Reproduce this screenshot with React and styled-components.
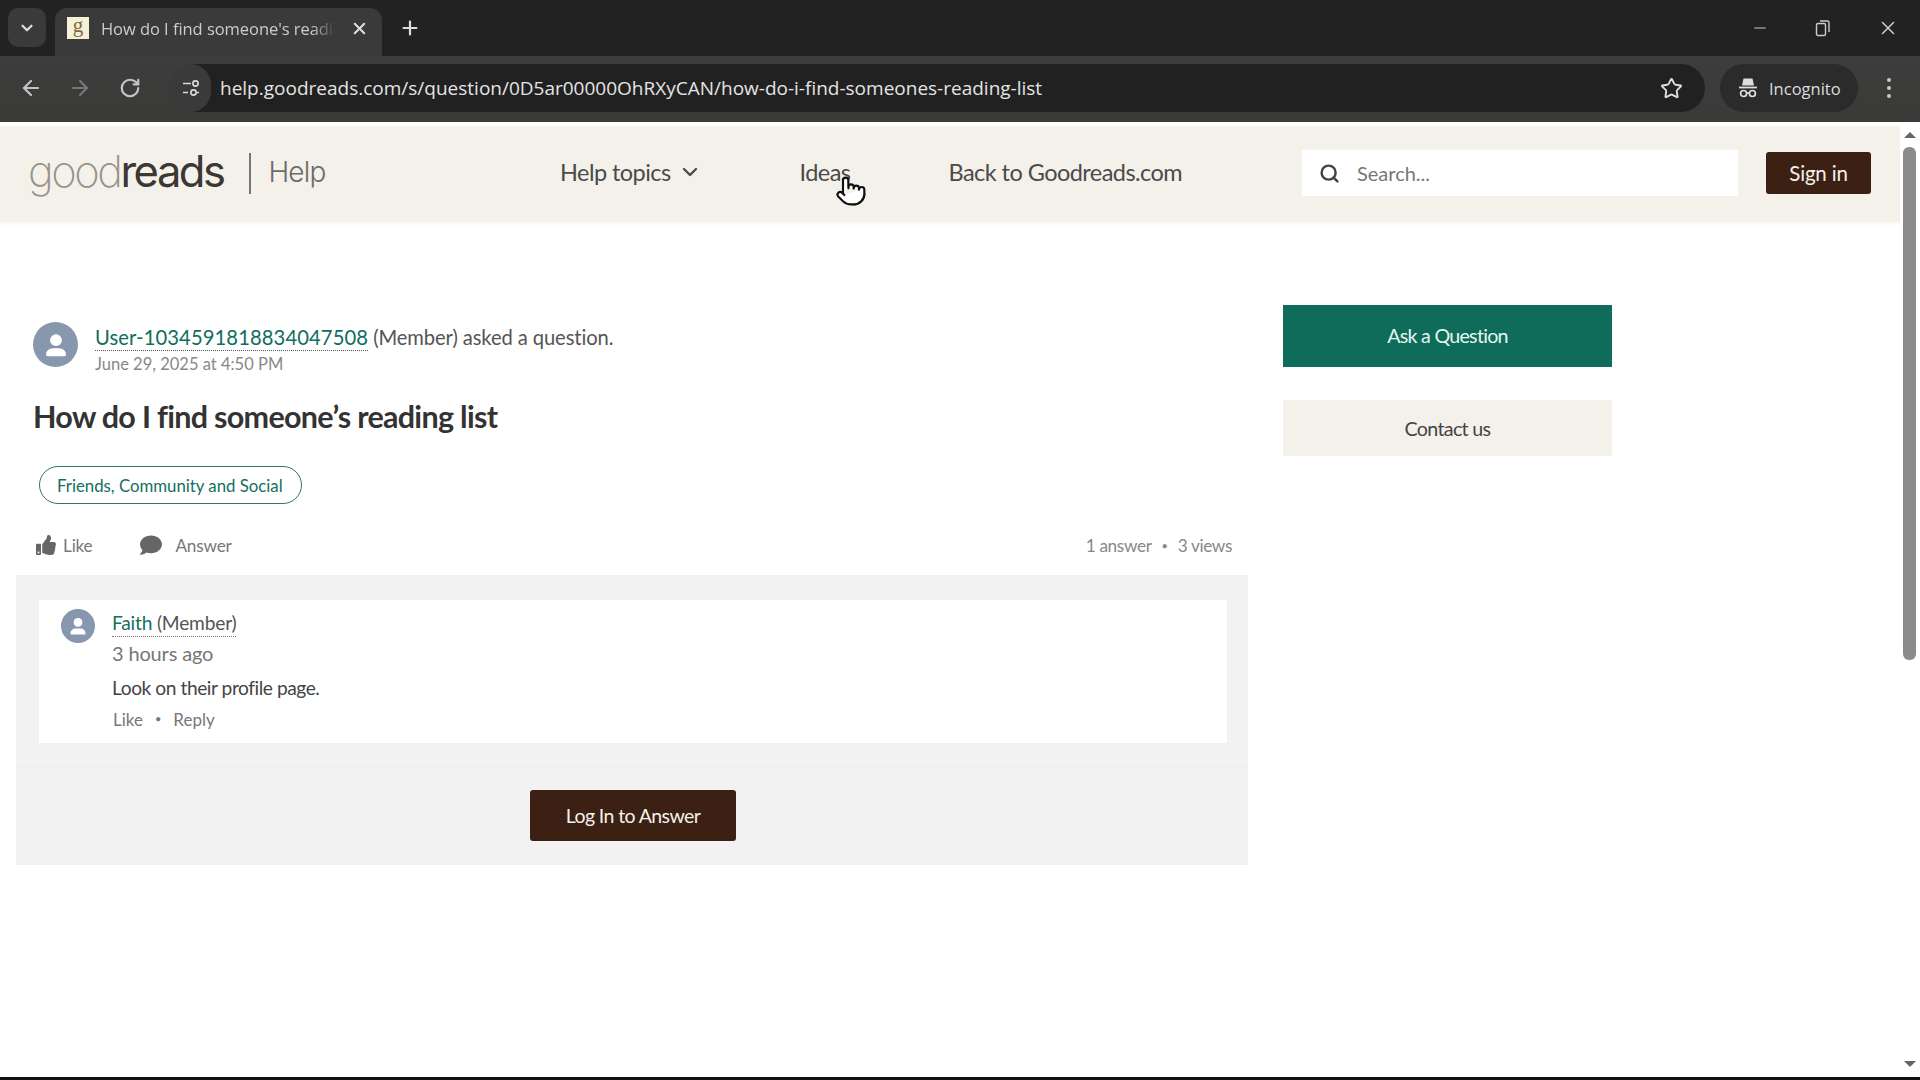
import React from "react";
import styled, { createGlobalStyle } from "styled-components";
import { ChevronDown, Search, ArrowLeft, ArrowRight, RotateCw, Star, X, Plus, Minus, Pointer } from "lucide-react";
import { FaThumbsUp, FaComment } from "react-icons/fa";

const Global = createGlobalStyle`
  html, body { margin: 0; padding: 0; height: 100%; overflow: hidden; background: #fff; }
  * { box-sizing: border-box; }
  body { font-family: Lato, "Open Sans", sans-serif; }
`;

const Screen = styled.div`
  width: 1920px; height: 1080px; display: flex; flex-direction: column; position: relative; overflow: hidden; background: #fff;
`;
const TabStrip = styled.div`
  height: 56px; background: #222; display: flex; align-items: flex-end; padding-left: 8px; color: #ddd;
  font-family: "Open Sans", sans-serif;
`;
const TabList = styled.button`
  width: 38px; height: 39px; margin-bottom: 9px; background: #3a3a3a; border: 0; border-radius: 10px; color: #ddd;
  display: flex; align-items: center; justify-content: center; padding: 0;
`;
const Tab = styled.div`
  width: 327px; height: 48px; margin-left: 9px; background: #3a3a3a; border-radius: 12px 12px 0 0; display: flex; align-items: center; padding: 0 12px 8px 12px;
`;
const Favicon = styled.div`
  width: 22px; height: 22px; background: #f4f1d8; color: #7a6a3a; font: 400 21px/17px "Liberation Serif", serif; text-align: center; flex: none;
`;
const TabTitle = styled.div`
  margin-left: 12px; width: 234px; overflow: hidden; white-space: nowrap; font-size: 16.5px; color: #ccc; letter-spacing: -0.05px;
  mask-image: linear-gradient(90deg, #000 90%, transparent);
`;
const TabClose = styled.div`
  margin-left: 15px; display: flex; color: #ddd;
`;
const NewTab = styled.div`
  margin: 0 0 17px 17px; display: flex; color: #ddd;
`;
const WindowControls = styled.div`
  margin-left: auto; height: 56px; display: flex; align-items: center; color: #ccc; padding-right: 21px; gap: 46px;
`;
const Toolbar = styled.div`
  height: 66px; background: linear-gradient(#3d3d3d, #3a3a38); display: flex; align-items: center; padding: 0 0 2px 19px; color: #bbb;
`;
const NavIcon = styled.div`
  display: flex; color: ${p => p.$dim ? "#777" : "#c4c4c4"}; margin-right: ${p => p.$gap}px; flex: none;
`;
const Omnibox = styled.div`
  width: 1535px; height: 48px; border-radius: 24px; background: #212121; display: flex; align-items: center; position: relative;
  font-family: "Open Sans", sans-serif;
`;
const SiteInfo = styled.div`
  width: 41px; height: 48px; border-radius: 24px; background: #3a3a3a; display: flex; align-items: center; justify-content: center; flex: none;
`;
const Url = styled.div`
  margin-left: 9px; font-size: 19px; color: #e4e4e4; white-space: nowrap; flex: 1;
`;
const StarSlot = styled.div`
  display: flex; margin-right: 22px; color: #ddd;
`;
const IncognitoPill = styled.div`
  width: 138px; height: 48px; margin-left: 15px; border-radius: 24px; background: #2b2b2b; display: flex; align-items: center; padding-left: 18px; gap: 11px;
  font: 16.5px "Open Sans", sans-serif; color: #ddd; flex: none;
`;
const Kebab = styled.div`
  margin-left: 29px; display: flex; flex-direction: column; gap: 4px;
  i { width: 4px; height: 4px; border-radius: 50%; background: #c8c8c8; display: block; }
`;

const Viewport = styled.div`
  flex: 1; display: flex; min-height: 0;
`;
const Main = styled.div`
  flex: 1; min-width: 0; padding-top: 4px;
`;
const Header = styled.header`
  height: 96px; background: #f4f1ea; display: flex; align-items: center; padding: 0 29px 2px; box-shadow: 0 2px 3px rgba(0,0,0,.04);
`;
const Logo = styled.div`
  display: flex; align-items: center; width: 531px; flex: none;
`;
const Wordmark = styled.div`
  font: 200 43.5px/50px Inter, "Liberation Sans", sans-serif; letter-spacing: -2.5px; color: #98938b; margin: -5px 0 0 -1px;
  b { font-weight: 400; color: #3b3733; }
`;
const LogoBar = styled.div`
  width: 2px; height: 41px; background: #7a756e; margin: 0 17px 0 26px;
`;
const LogoHelp = styled.div`
  font: 300 28px/40px Inter, "Liberation Sans", sans-serif; color: #6f6b66; letter-spacing: -0.8px; margin-top: -2px;
`;
const Nav = styled.nav`
  display: flex; align-items: center; gap: 98px; margin-top: -2px;
`;
const NavLink = styled.div`
  display: flex; align-items: center; gap: 7px; font-size: 23.5px; color: #4a4a4a; letter-spacing: -0.55px; white-space: nowrap;
`;
const SearchBox = styled.div`
  width: 436px; height: 46px; margin-left: auto; background: #fff; display: flex; align-items: center; padding-left: 17px; gap: 17px; font-size: 20px; color: #777;
`;
const SignIn = styled.button`
  width: 105px; height: 42px; margin-left: 28px; background: #3b2013; color: #f4f1ea; border: 0; border-radius: 3px; font: 20.5px Lato, sans-serif; letter-spacing: -0.2px; padding: 0;
`;
const Body = styled.div`
  display: grid; grid-template-columns: 1232px 329px; column-gap: 35px; padding-left: 16px;
`;
const Left = styled.main`
  padding-top: 100px;
`;
const Question = styled.section`
  padding-left: 17px;
`;
const Byline = styled.div`
  display: flex; gap: 17px; align-items: flex-start;
`;
const Avatar = styled.div`
  width: ${p => p.$size}px; height: ${p => p.$size}px; border-radius: 50%; background: #8798ae; display: flex; align-items: center; justify-content: center; flex: none;
`;
const BylineText = styled.div`
  margin-top: 2px;
`;
const BylineTop = styled.div`
  font-size: 20.2px; line-height: 26px; color: #555; letter-spacing: -0.1px;
`;
const UserLink = styled.a`
  color: #0f6e5c; border-bottom: 1px dotted #555; padding-bottom: 1px; letter-spacing: 0.1px;
`;
const BylineDate = styled.div`
  font-size: 16.5px; line-height: 20px; color: #888; margin-top: 4px; letter-spacing: 0;
`;
const Title = styled.h1`
  margin: 22px 0 0; font: 700 30.5px/40px Lato, sans-serif; color: #333; letter-spacing: -0.7px;
`;
const Pill = styled.div`
  display: inline-flex; align-items: center; height: 38px; margin: 30px 0 0 6px; padding: 0 18px 0 17px; border: 1.5px solid #2b7868; border-radius: 19px; font-size: 16.8px; color: #14705f; white-space: nowrap;
`;
const Actions = styled.div`
  display: flex; align-items: center; height: 30px; margin-top: 26px; padding: 0 16px 0 3px; font-size: 17.2px; color: #777; letter-spacing: -0.2px;
`;
const Action = styled.div`
  display: flex; align-items: center; gap: ${p => p.$gap}px; margin-right: 48px;
`;
const Stats = styled.div`
  margin: 2px 0 0 auto; display: flex; gap: 10px; font-size: 17.2px; color: #888; letter-spacing: -0.35px;
`;
const SmallDot = styled.span`
  font-size: 11px; line-height: 22px;
`;
const Panel = styled.div`
  margin-top: 15px; height: 290px; background: #f2f2f2; padding-top: 25px;
`;
const Card = styled.div`
  margin: 0 21px 0 23px; height: 143px; background: #fff; padding: 9px 22px 0; display: flex; gap: 17px;
`;
const CommentBody = styled.div`
  display: flex; flex-direction: column; padding-top: 1px;
`;
const CommentAuthor = styled.div`
  align-self: flex-start; font-size: 19.2px; line-height: 26px; color: #555; border-bottom: 1px dotted #777; letter-spacing: -0.2px;
  a { color: #14705f; }
`;
const Ago = styled.div`
  font-size: 20px; line-height: 28px; color: #777; margin-top: 2px; letter-spacing: -0.15px;
`;
const CommentText = styled.div`
  font-size: 19.2px; line-height: 26px; color: #444; margin-top: 8px; letter-spacing: -0.45px;
`;
const CommentActions = styled.div`
  display: flex; gap: 12px; font-size: 17px; line-height: 24px; color: #777; margin-top: 7px; padding-left: 1px;
`;
const PanelFooter = styled.div`
  margin-top: 23px; border-top: 1px solid #ececec; padding-top: 23px; display: flex; justify-content: center;
`;
const LoginButton = styled.button`
  width: 206px; height: 51px; background: #3b2013; color: #f4f1ea; border: 0; border-radius: 3px; font: 19.5px Lato, sans-serif; letter-spacing: -0.6px; padding: 0; margin-left: 2px;
`;
const Aside = styled.aside`
  padding-top: 83px; display: flex; flex-direction: column; gap: 33px;
`;
const AskButton = styled.div`
  height: 62px; background: #0f6b5a; color: #e4f6ef; display: flex; align-items: center; justify-content: center; font-size: 19.7px; letter-spacing: -0.75px; padding-bottom: 2px;
`;
const ContactButton = styled.div`
  height: 56px; background: #f4f1ea; color: #444; display: flex; align-items: center; justify-content: center; font-size: 19.7px; letter-spacing: -0.7px;
`;
const Scrollbar = styled.div`
  width: 20px; flex: none; background: #fff; display: flex; flex-direction: column; align-items: center; position: relative; padding-top: 10px;
`;
const ArrowUp = styled.div`
  width: 0; height: 0; border: 6px solid transparent; border-top: 0; border-bottom: 6px solid #666;
`;
const Thumb = styled.div`
  width: 13px; height: 513px; margin-top: 9px; margin-left: -1px; border-radius: 6px; background: #8b8b8b;
`;
const ArrowDown = styled.div`
  width: 0; height: 0; border: 6px solid transparent; border-bottom: 0; border-top: 6px solid #666; margin-top: auto; margin-bottom: 10px;
`;
const BottomEdge = styled.div`
  height: 3px; background: #111; flex: none;
`;
const Cursor = styled.div`
  position: absolute; left: 835px; top: 175px; color: #111; display: flex;
  svg { fill: #fff; }
`;

const PersonIcon = ({ size }) => (
  <svg width={size} height={size} viewBox="0 0 24 24" fill="#fff">
    <circle cx="12" cy="8.4" r="4.4" />
    <path d="M4.5 19.2c0-2.6 2.6-4.7 5-4.7h5c2.4 0 5 2.1 5 4.7 0 .8-.6 1.3-1.3 1.3H5.8c-.7 0-1.3-.5-1.3-1.3z" />
  </svg>
);

const TuneIcon = () => (
  <svg width="20" height="20" viewBox="0 0 20 20" fill="none" stroke="#d8d8d8" strokeWidth="1.7">
    <path d="M2 5.5h8M2 14.5h5" />
    <circle cx="14.5" cy="5.5" r="2.6" />
    <circle cx="12.5" cy="14.5" r="2.6" />
    <path d="M16 14.5h2" />
  </svg>
);

const RestoreIcon = () => (
  <svg width="16" height="18" viewBox="0 0 16 18" fill="none" stroke="#ccc" strokeWidth="1.4">
    <rect x="1.5" y="4.5" width="9" height="12" rx="1.5" />
    <path d="M5 2h7.5A1.5 1.5 0 0 1 14 3.5V13" />
  </svg>
);

const IncognitoIcon = () => (
  <svg width="20" height="22" viewBox="0 0 20 22" fill="#ddd">
    <path d="M5.5 1.5h9l1.5 7H4z" />
    <rect x="1" y="9.6" width="18" height="1.8" />
    <g fill="none" stroke="#ddd" strokeWidth="1.7">
      <circle cx="5.6" cy="16.5" r="3" />
      <circle cx="14.4" cy="16.5" r="3" />
      <path d="M8.6 16h2.8" />
    </g>
  </svg>
);

export default function App() {
  return (
    <Screen>
      <Global />
      <TabStrip>
        <TabList><ChevronDown size={18} strokeWidth={3} /></TabList>
        <Tab>
          <Favicon>g</Favicon>
          <TabTitle>How do I find someone's reading list</TabTitle>
          <TabClose><X size={19} strokeWidth={2.6} /></TabClose>
        </Tab>
        <NewTab><Plus size={22} strokeWidth={2.4} /></NewTab>
        <WindowControls>
          <Minus size={18} strokeWidth={1.6} />
          <RestoreIcon />
          <X size={22} strokeWidth={1.6} />
        </WindowControls>
      </TabStrip>
      <Toolbar>
        <NavIcon $gap={25}><ArrowLeft size={24} strokeWidth={2.2} /></NavIcon>
        <NavIcon $dim $gap={27}><ArrowRight size={24} strokeWidth={2.2} /></NavIcon>
        <NavIcon $gap={29}><RotateCw size={22} strokeWidth={2.4} /></NavIcon>
        <Omnibox>
          <SiteInfo><TuneIcon /></SiteInfo>
          <Url>help.goodreads.com/s/question/0D5ar00000OhRXyCAN/how-do-i-find-someones-reading-list</Url>
          <StarSlot><Star size={23} strokeWidth={2} /></StarSlot>
        </Omnibox>
        <IncognitoPill><IncognitoIcon />Incognito</IncognitoPill>
        <Kebab><i /><i /><i /></Kebab>
      </Toolbar>
      <Viewport>
        <Main>
          <Header>
            <Logo>
              <Wordmark>good<b>reads</b></Wordmark>
              <LogoBar />
              <LogoHelp>Help</LogoHelp>
            </Logo>
            <Nav>
              <NavLink>Help topics <ChevronDown size={24} strokeWidth={2.4} /></NavLink>
              <NavLink>Ideas</NavLink>
              <NavLink>Back to Goodreads.com</NavLink>
            </Nav>
            <SearchBox><Search size={21} strokeWidth={2.8} color="#444" />Search...</SearchBox>
            <SignIn>Sign in</SignIn>
          </Header>
          <Body>
            <Left>
              <Question>
                <Byline>
                  <Avatar $size={45}><PersonIcon size={32} /></Avatar>
                  <BylineText>
                    <BylineTop><UserLink>User-1034591818834047508</UserLink> (Member) asked a question.</BylineTop>
                    <BylineDate>June 29, 2025 at 4:50 PM</BylineDate>
                  </BylineText>
                </Byline>
                <Title>How do I find someone’s reading list</Title>
                <Pill>Friends, Community and Social</Pill>
                <Actions>
                  <Action $gap={7}><FaThumbsUp size={20} color="#666" />Like</Action>
                  <Action $gap={13}><FaComment size={22} color="#666" />Answer</Action>
                  <Stats><span>1 answer</span><SmallDot>•</SmallDot><span>3 views</span></Stats>
                </Actions>
              </Question>
              <Panel>
                <Card>
                  <Avatar $size={34}><PersonIcon size={24} /></Avatar>
                  <CommentBody>
                    <CommentAuthor><a>Faith</a> (Member)</CommentAuthor>
                    <Ago>3 hours ago</Ago>
                    <CommentText>Look on their profile page.</CommentText>
                    <CommentActions><span>Like</span><SmallDot>•</SmallDot><span>Reply</span></CommentActions>
                  </CommentBody>
                </Card>
                <PanelFooter><LoginButton>Log In to Answer</LoginButton></PanelFooter>
              </Panel>
            </Left>
            <Aside>
              <AskButton>Ask a Question</AskButton>
              <ContactButton>Contact us</ContactButton>
            </Aside>
          </Body>
        </Main>
        <Scrollbar>
          <ArrowUp />
          <Thumb />
          <ArrowDown />
        </Scrollbar>
      </Viewport>
      <BottomEdge />
      <Cursor><Pointer size={32} strokeWidth={1.6} /></Cursor>
    </Screen>
  );
}
